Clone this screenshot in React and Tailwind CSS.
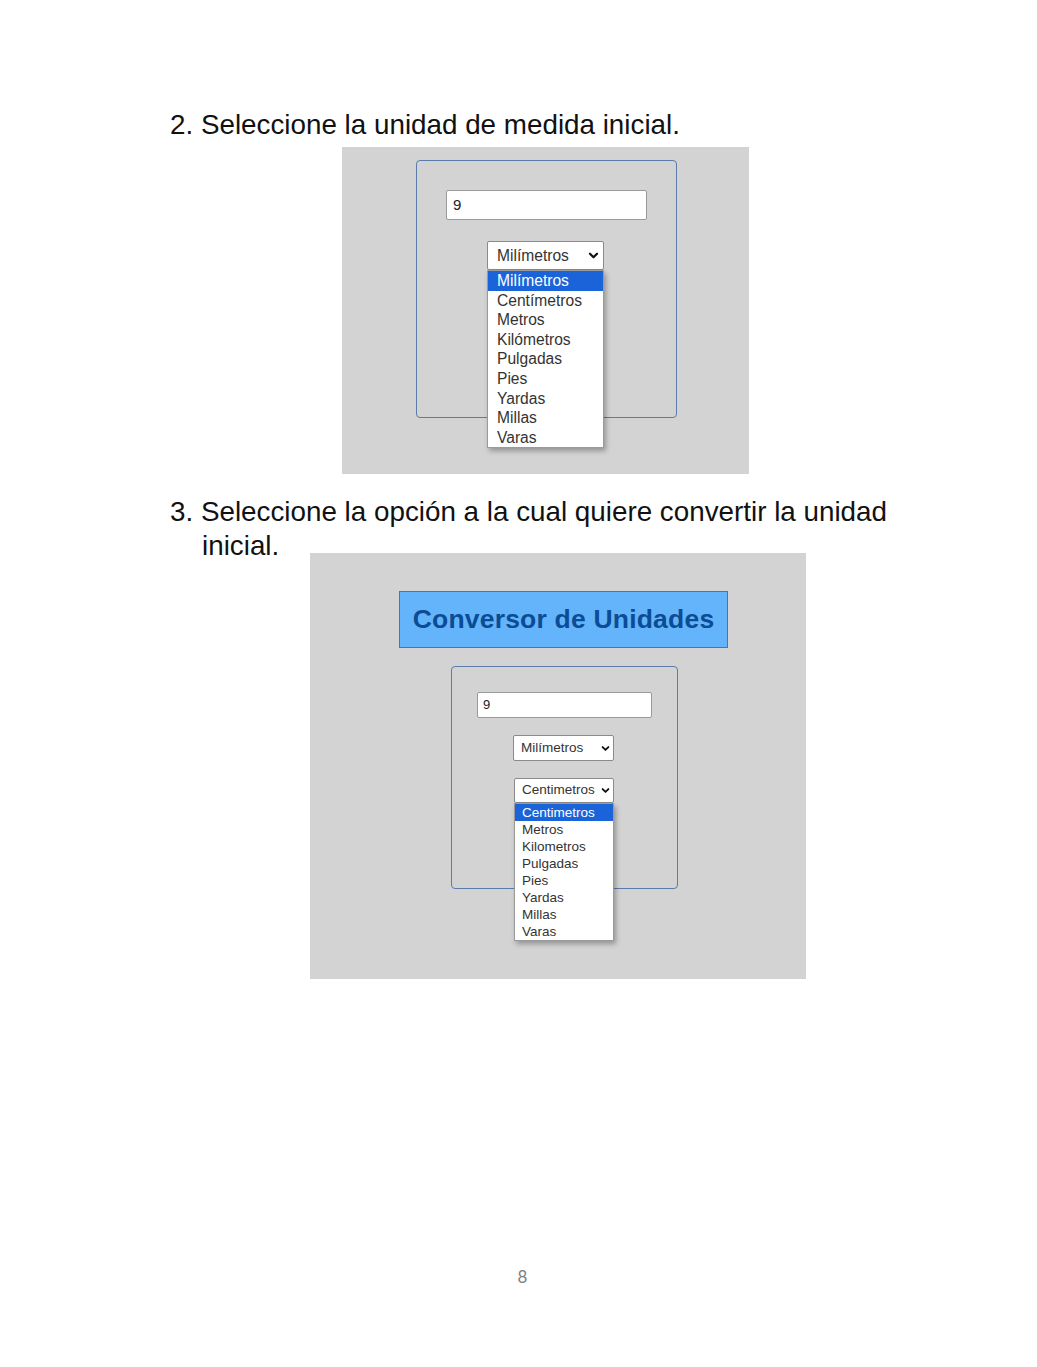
import React from "react";

const Chevron = ({ size = 10 }) => (
  <svg width={size} height={size} viewBox="0 0 10 10" className="shrink-0">
    <path d="M1.8 3.4 L5 6.6 L8.2 3.4" fill="none" stroke="#111" strokeWidth="2" strokeLinecap="round" strokeLinejoin="round" />
  </svg>
);

const list1 = ["Milímetros", "Centímetros", "Metros", "Kilómetros", "Pulgadas", "Pies", "Yardas", "Millas", "Varas"];
const list2 = ["Centimetros", "Metros", "Kilometros", "Pulgadas", "Pies", "Yardas", "Millas", "Varas"];

export default function App() {
  return (
    <div className="w-[1037px] h-[1367px] bg-white relative" style={{ fontFamily: '"Liberation Sans", Arial, sans-serif' }}>
      <div className="pt-[108px]">
        <p className="ml-[170px] text-[27.8px] leading-[34px] text-[#111]">2. Seleccione la unidad de medida inicial.</p>

        {/* Screenshot 1 */}
        <div className="ml-[342px] mt-[5px] w-[407px] h-[327px] bg-[#d3d3d3] pt-[13px]">
          <div className="ml-[74px] w-[261px] h-[258px] border border-[#5b7ba8] rounded-[4px] pt-[29px] pl-[29px]">
            <div className="w-[201px] h-[30px] bg-white border border-[#9a9a9a] rounded-[2px] flex items-center pl-[6px] text-[15px] text-[#222]">9</div>
            <div className="relative ml-[41px] mt-[21px] w-[117px] h-[29px]">
              <div className="w-full h-full bg-white border border-[#8a8a8a] rounded-[2px] flex items-center justify-between pl-[9px] pr-[4px] text-[15.6px] text-[#333]">
                <span>Milímetros</span>
                <Chevron size={11} />
              </div>
              <div className="absolute left-0 top-full w-[117px] bg-white border border-[#9a9a9a] shadow-[2px_3px_5px_rgba(0,0,0,0.3)]">
                {list1.map((t, i) => (
                  <div key={t} className={`h-[19.6px] leading-[19.6px] pl-[9px] text-[15.6px] ${i === 0 ? "bg-[#1a63d8] text-white" : "text-[#333]"}`}>{t}</div>
                ))}
              </div>
            </div>
          </div>
        </div>

        <p className="ml-[170px] mt-[21px] w-[760px] pl-[32px] -indent-8 text-[27.8px] leading-[34px] text-[#111]">
          3. Seleccione la opción a la cual quiere convertir la unidad inicial.
        </p>

        {/* Screenshot 2 */}
        <div className="ml-[310px] -mt-[10px] w-[496px] h-[426px] bg-[#d3d3d3] pt-[38px]">
          <div className="ml-[89px] w-[329px] h-[57px] bg-[#63b4fb] border border-[#3b78c4] flex items-center justify-center">
            <span className="text-[26.5px] font-bold text-[#0b4c94] tracking-[0.2px]">Conversor de Unidades</span>
          </div>
          <div className="ml-[141px] mt-[18px] w-[227px] h-[223px] border border-[#5b7ba8] rounded-[4px] pt-[25px] pl-[25px]">
            <div className="w-[175px] h-[26px] bg-white border border-[#9a9a9a] rounded-[2px] flex items-center pl-[5px] text-[13px] text-[#222]">9</div>
            <div className="ml-[36px] mt-[17px] w-[101px] h-[26px] bg-white border border-[#8a8a8a] rounded-[2px] flex items-center justify-between pl-[7px] pr-[3px] text-[13.5px] text-[#333]">
              <span>Milímetros</span>
              <Chevron size={9} />
            </div>
            <div className="relative ml-[37px] mt-[17px] w-[100px] h-[25px]">
              <div className="w-full h-full bg-white border border-[#8a8a8a] rounded-[2px] flex items-center justify-between pl-[7px] pr-[3px] text-[13.5px] text-[#333]">
                <span>Centimetros</span>
                <Chevron size={9} />
              </div>
              <div className="absolute left-0 top-full w-[100px] bg-white border border-[#9a9a9a] shadow-[2px_3px_5px_rgba(0,0,0,0.3)]">
                {list2.map((t, i) => (
                  <div key={t} className={`h-[17px] leading-[17px] pl-[7px] text-[13.5px] ${i === 0 ? "bg-[#1a63d8] text-white" : "text-[#333]"}`}>{t}</div>
                ))}
              </div>
            </div>
          </div>
        </div>
      </div>

      <div className="absolute left-0 top-[1264px] w-full text-center text-[17px] text-[#808080] pl-[8px]" style={{ fontFamily: 'Lato, "Liberation Sans", sans-serif' }}>8</div>
    </div>
  );
}
